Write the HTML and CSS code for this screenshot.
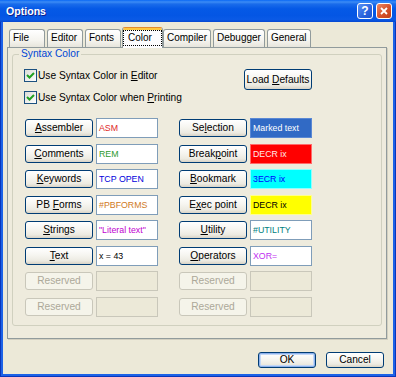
FILE: index.html
```html
<!DOCTYPE html>
<html>
	<head>
		<meta charset="UTF-8">
		<title>Options</title>
		<link rel="stylesheet" href="styles.css">
	</head>
	<body>
		<div class="window">
			<div class="titlebar">
				<span class="title">Options</span>
				<span class="cap-btn help">?</span>
				<span class="cap-btn close">
					<svg width="8" height="8" viewBox="0 0 8 8"><path d="M1 1L7 7M7 1L1 7" stroke="#fff" stroke-width="1.8" fill="none"/></svg>
				</span>
			</div>
			<div class="client">
				<div class="tabs">
					<span class="tab">File</span>
					<span class="tab">Editor</span>
					<span class="tab">Fonts</span>
					<span class="tab active"><span class="focus">Color</span></span>
					<span class="tab">Compiler</span>
					<span class="tab">Debugger</span>
					<span class="tab">General</span>
				</div>
				<div class="panel">
					<fieldset class="group">
						<legend>Syntax Color</legend>
						<div class="top">
							<div class="checks">
								<label class="check">
									<span class="box"><svg width="11" height="11" viewBox="0 0 11 11"><path d="M2 5l2.5 2.5L9 3" fill="none" stroke="#21A121" stroke-width="2"/></svg></span>
									<span>Use Syntax Color in <u>E</u>ditor</span>
								</label>
								<label class="check">
									<span class="box"><svg width="11" height="11" viewBox="0 0 11 11"><path d="M2 5l2.5 2.5L9 3" fill="none" stroke="#21A121" stroke-width="2"/></svg></span>
									<span>Use Syntax Color when <u>P</u>rinting</span>
								</label>
							</div>
							<button class="btn load">Load <u>D</u>efaults</button>
						</div>
						<div class="colors">
							<div class="pair"><button class="btn"><u>A</u>ssembler</button><span class="sample asm">ASM</span></div>
							<div class="pair"><button class="btn">Se<u>l</u>ection</button><span class="sample sel">Marked text</span></div>
							<div class="pair"><button class="btn"><u>C</u>omments</button><span class="sample rem">REM</span></div>
							<div class="pair"><button class="btn">Break<u>p</u>oint</button><span class="sample brk">DECR ix</span></div>
							<div class="pair"><button class="btn"><u>K</u>eywords</button><span class="sample kw">TCP OPEN</span></div>
							<div class="pair"><button class="btn"><u>B</u>ookmark</button><span class="sample bmk">3ECR ix</span></div>
							<div class="pair"><button class="btn">PB <u>F</u>orms</button><span class="sample pbf">#PBFORMS</span></div>
							<div class="pair"><button class="btn">E<u>x</u>ec point</button><span class="sample exe">DECR ix</span></div>
							<div class="pair"><button class="btn"><u>S</u>trings</button><span class="sample str">"Literal text"</span></div>
							<div class="pair"><button class="btn"><u>U</u>tility</button><span class="sample utl">#UTILITY</span></div>
							<div class="pair"><button class="btn"><u>T</u>ext</button><span class="sample">x = 43</span></div>
							<div class="pair"><button class="btn"><u>O</u>perators</button><span class="sample ops">XOR=</span></div>
							<div class="pair"><button class="btn" disabled>Reserved</button><span class="sample off"></span></div>
							<div class="pair"><button class="btn" disabled>Reserved</button><span class="sample off"></span></div>
							<div class="pair"><button class="btn" disabled>Reserved</button><span class="sample off"></span></div>
							<div class="pair"><button class="btn" disabled>Reserved</button><span class="sample off"></span></div>
						</div>
					</fieldset>
				</div>
				<div class="footer">
					<button class="btn default">OK</button>
					<button class="btn">Cancel</button>
				</div>
			</div>
		</div>
	</body>
</html>
```

FILE: styles.css
```css
html, body {
	margin: 0;
	padding: 0;
}
body {
	width: 396px;
	height: 377px;
	overflow: hidden;
	background: #ECE9D8;
	font-family: "Liberation Sans", Arial, sans-serif;
	font-size: 10.2px;
	color: #000;
}
.window {
	box-sizing: border-box;
	width: 396px;
	height: 377px;
	padding: 0 3px 3px;
	display: flex;
	flex-direction: column;
	background: #1C62E7;
	box-shadow: inset 1px 0 #0A36BA, inset -1px 0 #0A36BA, inset 0 -1px #0A36BA;
}
.titlebar {
	height: 22px;
	margin: 0 -3px;
	padding: 0 4px 0 6px;
	display: flex;
	align-items: center;
	background: linear-gradient(#0A68F5 0%, #3C8CF5 9%, #1A6CEB 18%, #0559E6 40%, #0456E4 70%, #0A5AE6 88%, #0648D0 100%);
	color: #fff;
}
.title {
	flex: 1;
	font-weight: bold;
	font-size: 10.6px;
	text-shadow: 1px 1px #0F1E8C;
}
.cap-btn {
	box-sizing: border-box;
	width: 16px;
	height: 16px;
	margin-left: 3px;
	border: 1px solid #fff;
	border-radius: 3px;
	display: flex;
	align-items: center;
	justify-content: center;
}
.help {
	background: linear-gradient(135deg, #5C93F6, #2A63DD 60%, #1E55CF);
	font-weight: bold;
	font-size: 12px;
}
.close {
	background: linear-gradient(135deg, #EE8863, #D5512B 55%, #C1401A);
}
.client {
	flex: 1;
	display: flex;
	flex-direction: column;
	padding: 5px 0 0 4px;
	background: #ECE9D8;
}
.tabs {
	display: flex;
	align-items: flex-end;
	height: 20px;
	padding-left: 2px;
	font-size: 10px;
}
.tab {
	box-sizing: border-box;
	height: 18px;
	min-width: 36px;
	margin-right: 2px;
	padding: 0 3px;
	border: 1px solid #919B9C;
	border-bottom: 0;
	border-radius: 3px 3px 0 0;
	background: linear-gradient(#FFFFFF, #F5F4EF 60%, #E7E5DC);
	line-height: 16px;
}
.tab.active {
	position: relative;
	z-index: 1;
	height: 21px;
	min-width: 41px;
	margin: 0 0 -1px -1px;
	padding: 2px 0 0;
	border-top-color: #E68B2C;
	background: #FCFCFE;
	box-shadow: inset 0 2px #FFC73C;
}
.focus {
	display: block;
	height: 16px;
	box-sizing: border-box;
	padding-left: 4px;
	border: 1px dotted #000;
	line-height: 14px;
}
.panel {
	box-sizing: border-box;
	width: 380px;
	height: 292px;
	border: 1px solid #919B9C;
	background: #EEEBDD;
	box-shadow: 1px 1px 0 #D2CFC0;
}
.group {
	box-sizing: border-box;
	height: 278px;
	min-width: 0;
	margin: 0 4px;
	padding: 9px 6px 0;
	border: 1px solid #D0D0BF;
	border-radius: 3px;
}
.group legend {
	padding: 0 2px;
	color: #0046D5;
	line-height: 12px;
}
.top {
	display: flex;
	justify-content: space-between;
	width: 293px;
}
.checks {
	display: flex;
	flex-direction: column;
	gap: 9px;
	padding-left: 5px;
}
.check {
	display: flex;
	align-items: center;
	gap: 1px;
	height: 13px;
}
.box {
	box-sizing: border-box;
	width: 13px;
	height: 13px;
	border: 1px solid #1C5180;
	background: linear-gradient(135deg, #DCDCD7, #FFFFFF);
}
.box svg {
	display: block;
}
.btn {
	box-sizing: border-box;
	padding: 0;
	border: 1px solid #003C74;
	border-radius: 3px;
	background: linear-gradient(#FFFFFF, #F6F5F0 45%, #ECEAE1 80%, #D8D3C6);
	font: inherit;
	color: #000;
	line-height: 14px;
}
.btn:disabled {
	border-color: #C9C7BA;
	background: #F5F4EA;
	color: #ACA899;
}
.load {
	width: 68px;
	height: 21px;
}
.colors {
	display: grid;
	grid-template-columns: 133px 133px;
	grid-auto-rows: 20px;
	column-gap: 21px;
	row-gap: 5.57px;
	margin: 14px 0 0 6px;
}
.pair {
	display: flex;
	align-items: center;
	gap: 3px;
}
.pair .btn {
	width: 68px;
	height: 18px;
}
.sample {
	box-sizing: border-box;
	width: 62px;
	height: 20px;
	padding: 0 2px;
	border: 1px solid #7F9DB9;
	background: #fff;
	font-size: 8.8px;
	line-height: 18px;
	white-space: nowrap;
	overflow: hidden;
}
.asm { color: #E02828; }
.rem { color: #2E9A2E; }
.kw { color: #0000DC; }
.pbf { color: #D07A1E; }
.str { color: #C000D0; }
.utl { color: #008080; }
.ops { color: #C030F0; }
.sel { background: #316AC5; border-color: #5A88D4; color: #fff; }
.brk { background: #FF0000; border-color: #FF6A6A; color: #FFE8E8; }
.bmk { background: #00FFFF; border-color: #8CFFFF; color: #0000FF; }
.exe { background: #FFFF00; border-color: #FFFF8C; color: #000; }
.off {
	border-color: #C9C7BA;
	background: #ECE9D8;
}
.footer {
	display: flex;
	justify-content: flex-end;
	gap: 10px;
	margin-top: 13px;
	padding-right: 9px;
}
.footer .btn {
	width: 58px;
	height: 16px;
}
.btn.default {
	box-shadow: inset 0 0 0 1px #8CB1EC, inset 0 0 0 2px #C4D8F6;
}
```
